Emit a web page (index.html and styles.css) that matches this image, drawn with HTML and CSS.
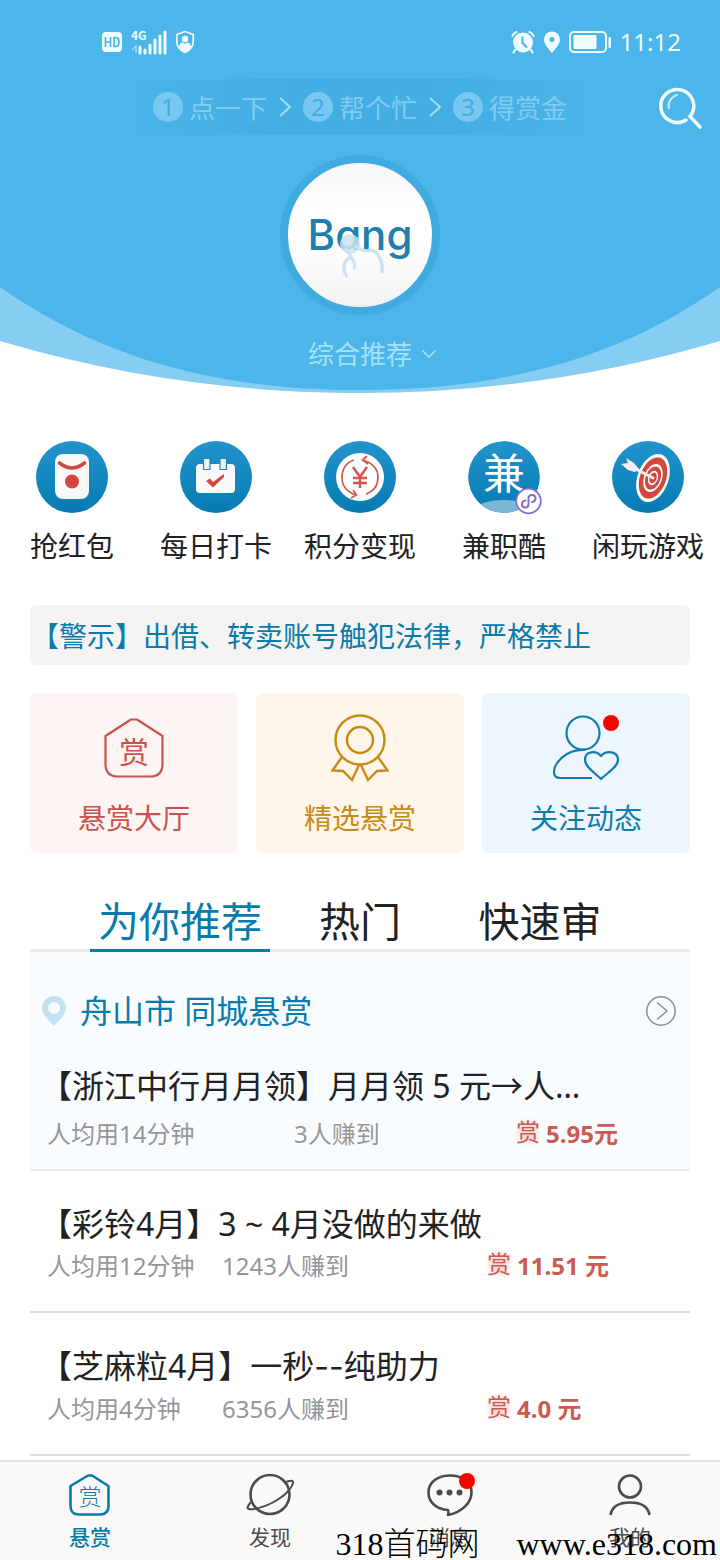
FILE: index.html
```html
<!DOCTYPE html>
<html lang="zh-CN">
<head>
<meta charset="utf-8">
<meta name="viewport" content="width=device-width, initial-scale=1">
<title>悬赏</title>
<link rel="stylesheet" href="styles.css">
</head>
<body>
<header class="hero">
  <svg class="hero-bg" viewBox="0 0 720 393" preserveAspectRatio="none" aria-hidden="true">
    <path fill="#86cdf3" d="M0 0H720V341Q545 393 360 393Q175 393 0 341Z"/>
    <path fill="#4cb5e9" d="M0 0H720V287C630 350 520 390 360 390C200 390 90 350 0 287Z"/>
  </svg>
  <div class="status">
    <div class="status-group">
      <svg width="22" height="22" viewBox="0 0 22 22"><rect x="1" y="1" width="20" height="20" rx="4" fill="#eefcff"/><path d="M4.500 6V16M9.500 6V16M4.500 11H9.500M13 6.500V15.500H14.500Q18 15.500 18 11T14.500 6.500Z" fill="none" stroke="#4cb5e9" stroke-width="1.700"/></svg>
      <div class="signal">
        <span class="net">4G</span>
        <svg width="36" height="24" viewBox="0 0 36 24"><path d="M9 17V23M14 20V23M19 15V23M24 10V23M29 6V23M34 2V23" stroke="#eefcff" stroke-width="3" stroke-linecap="round"/><path d="M1 20L5 16V23" stroke="#9bdcf6" stroke-width="1.500" fill="none"/></svg>
      </div>
      <svg width="20" height="24" viewBox="0 0 20 24"><path d="M10 1.500L18.200 4.500V12Q18.200 18.500 10 22.500Q1.800 18.500 1.800 12V4.500Z" fill="none" stroke="#eefcff" stroke-width="1.700" stroke-linejoin="round"/><circle cx="10" cy="9" r="3.200" fill="#eefcff"/><path d="M4 17Q4.500 12.500 8 12.500L10 14L12 12.500Q15.500 12.500 16 17Q14 20 10 22Q6 20 4 17Z" fill="#eefcff"/></svg>
    </div>
    <div class="status-group">
      <svg width="24" height="24" viewBox="0 0 24 24"><circle cx="12" cy="12.500" r="10" fill="#eefcff"/><path d="M1.500 6Q2.500 3 5.500 2M22.500 6Q21.500 3 18.500 2M4 20L2.500 22.500M20 20L21.500 22.500" stroke="#eefcff" stroke-width="2.200" stroke-linecap="round" fill="none"/><path d="M11.500 6.500V13L16 17.500" stroke="#4cb5e9" stroke-width="2" fill="none"/></svg>
      <svg width="18" height="24" viewBox="0 0 18 24"><path fill-rule="evenodd" fill="#eefcff" d="M9 1.500A8 8 0 0 0 1 9.500C1 14 5 18 9 23C13 18 17 14 17 9.500A8 8 0 0 0 9 1.500ZM9 7A2.500 2.500 0 1 1 9 12A2.500 2.500 0 1 1 9 7Z"/></svg>
      <svg width="43" height="24" viewBox="0 0 43 24"><rect x="1" y="2" width="36" height="20" rx="4" fill="none" stroke="#eefcff" stroke-width="2"/><rect x="4.500" y="5" width="23" height="14" rx="1" fill="#eefcff"/><rect x="39.500" y="7" width="2.500" height="11" rx="1" fill="#eefcff"/></svg>
      <time class="clock">11:12</time>
    </div>
  </div>
  <div class="guide">
    <ol class="steps">
      <li><span class="num">1</span>点一下</li>
      <li><svg class="arrow" width="14" height="22" viewBox="0 0 14 22"><path d="M2 2L12 11L2 20" fill="none" stroke="#a3dffa" stroke-width="2"/></svg><span class="num">2</span>帮个忙</li>
      <li><svg class="arrow" width="14" height="22" viewBox="0 0 14 22"><path d="M2 2L12 11L2 20" fill="none" stroke="#a3dffa" stroke-width="2"/></svg><span class="num">3</span>得赏金</li>
    </ol>
    <button class="search" type="button" aria-label="搜索"><svg width="42" height="42" viewBox="0 0 42 42" fill="none" stroke="#f2fdff" stroke-linecap="round"><path d="M26 34A16.500 16.500 0 1 1 30 30.500L40 41" stroke-width="3.500"/><path d="M9 22A11 11 0 0 1 17 9" stroke="#c4ebfb" stroke-width="2.200"/></svg></button>
  </div>
  <button class="bang" type="button">
    <span>Bang</span>
    <svg class="hand" width="50" height="46" viewBox="0 0 50 46" fill="none" stroke="#c9e3f0" stroke-width="3.200" stroke-linecap="round"><circle cx="14" cy="11" r="10" fill="#c9e3f0" fill-opacity=".85" stroke="none"/><path d="M10 16L15 24Q19 28 18.500 35M13 25Q4 32 10.500 43M20 13Q28 20 35 17Q47 21 46 39"/></svg>
  </button>
  <button class="filter" type="button">综合推荐<svg width="16" height="10" viewBox="0 0 16 10"><path d="M1.500 1.500L8 8L14.500 1.500" fill="none" stroke="#a5e3fb" stroke-width="1.600"/></svg></button>
</header>

<main>
  <svg class="defs" width="0" height="0" aria-hidden="true"><defs><linearGradient id="blue" x1="0" y1="0" x2="0" y2="1"><stop offset="0" stop-color="#2393cd"/><stop offset="1" stop-color="#057bb1"/></linearGradient><clipPath id="disc"><circle cx="36" cy="36" r="36"/></clipPath></defs></svg>
  <nav class="cats">
    <a href="#"><svg viewBox="0 0 72 72"><circle cx="36" cy="36" r="36" fill="url(#blue)"/><rect x="19" y="13" width="34" height="45" rx="8" fill="#faf9fa"/><path d="M23.500 22Q36 32 48.500 22" fill="none" stroke="#d2483f" stroke-width="3.600" stroke-linecap="round"/><circle cx="36" cy="40.500" r="7" fill="#d2483f"/></svg>抢红包</a>
    <a href="#"><svg viewBox="0 0 72 72"><circle cx="36" cy="36" r="36" fill="url(#blue)"/><rect x="16" y="23" width="39" height="29" rx="4" fill="#fafafa"/><path d="M23.500 17.500H30V28.500H23.500ZM40 17.500H46.500V28.500H40Z" fill="#eaf3fa" stroke="#2683b2" stroke-width="1.200"/><path d="M26 40L30 37.500L33 41L44 33V36L33 46.500Z" fill="#d2483f"/></svg>每日打卡</a>
    <a href="#"><svg viewBox="0 0 72 72"><circle cx="36" cy="36" r="36" fill="url(#blue)"/><circle cx="36" cy="36" r="24" fill="#fff"/><g fill="none" stroke="#d45750"><path d="M30 19Q18 23 18 37Q18 49 32 54M29 49L32.500 54L27 57M42 53Q54 49 54 36Q54 24 39 19M43 15L38.500 19L44 23" stroke-width="1.700"/><path d="M29 26L36 36L43 26M36 36V47M29 37H43M29 42H43" stroke-width="2.500"/></g></svg>积分变现</a>
    <a href="#"><svg viewBox="0 0 72 72"><g clip-path="url(#disc)"><circle cx="36" cy="36" r="36" fill="url(#blue)"/><ellipse cx="36" cy="75" rx="36" ry="16" fill="#7db7d7"/></g><text x="36" y="48" text-anchor="middle" class="jian">兼</text><circle cx="60.500" cy="60" r="12.300" fill="#fff" stroke="#8271d0" stroke-width="1.800"/><path d="M57.500 59.500Q54 60 54 63Q54 66.500 57.500 66.500Q60.500 66.500 60.500 63V57.500Q60.500 54 64 54Q67.500 54 67.500 57.500Q67.500 60.500 64 61" fill="none" stroke="#8271d0" stroke-width="2" stroke-linecap="round"/></svg>兼职酷</a>
    <a href="#"><svg viewBox="0 0 72 72"><circle cx="36" cy="36" r="36" fill="url(#blue)"/><g transform="rotate(20 41 37)"><ellipse cx="41" cy="37" rx="15.500" ry="25" fill="#fafafa"/><ellipse cx="41" cy="37" rx="13" ry="21.500" fill="#d2483f"/><ellipse cx="41" cy="37" rx="9" ry="14.500" fill="#fafafa"/><ellipse cx="41" cy="37" rx="7.500" ry="12" fill="#d2483f"/><ellipse cx="41" cy="37" rx="4.800" ry="7.500" fill="#fafafa"/><ellipse cx="41" cy="37" rx="3.500" ry="5.500" fill="#d2483f"/></g><path d="M41 37L22 27" stroke="#fbeef0" stroke-width="2.800" stroke-linecap="round"/><path d="M27 28L22 22L14 17L16 22L9 23L16 29L23 31Z" fill="#fbeef0"/></svg>闲玩游戏</a>
  </nav>

  <div class="wrap">
    <p class="notice">【警示】出借、转卖账号触犯法律，严格禁止</p>

    <nav class="cards">
      <a class="card red" href="#"><svg width="72" height="72" viewBox="0 0 72 72"><path d="M33 7.500H39L64.500 24V52Q64.500 64.500 52 64.500H20Q7.500 64.500 7.500 52V24Z" fill="none" stroke="currentColor" stroke-width="2.200" stroke-linejoin="round"/><text x="36" y="51" text-anchor="middle" class="shang-lg">赏</text></svg>悬赏大厅</a>
      <a class="card gold" href="#"><svg width="72" height="72" viewBox="0 0 72 72" fill="none" stroke="currentColor" stroke-width="2.400"><circle cx="36" cy="28" r="24.500"/><circle cx="36" cy="28" r="13"/><path d="M18 45L8.500 58.500L19 59L28 68L35 53M54 45L63.500 58.500L53 59L44 68L37 53"/></svg>精选悬赏</a>
      <a class="card blue" href="#"><svg width="72" height="72" viewBox="0 0 72 72" fill="none" stroke="currentColor" stroke-width="2.200"><circle cx="33" cy="21" r="16.500"/><path d="M35 38C15 37 4 52 4 60Q4 66 10 66H42"/><path d="M51 67C45 61 35 55 35 48C35 39 46 38 51 44C56 38 68 39 68 48C68 55 57 61 51 67Z" stroke-linejoin="round"/><circle cx="61" cy="11" r="8" fill="#fb0000" stroke="none"/></svg>关注动态</a>
    </nav>

    <div class="tabs" role="tablist">
      <button type="button" role="tab" aria-selected="true">为你推荐</button>
      <button type="button" role="tab" aria-selected="false">热门</button>
      <button type="button" role="tab" aria-selected="false">快速审</button>
    </div>

    <section class="city">
      <a class="city-head" href="#">
        <svg width="24" height="30" viewBox="0 0 24 30"><path fill="#c3e1f0" fill-rule="evenodd" d="M12 0A12 12 0 0 0 0 12C0 19 7 24 12 30C17 24 24 19 24 12A12 12 0 0 0 12 0ZM12 6A6 6 0 1 1 12 18A6 6 0 1 1 12 6Z"/></svg>
        <h2>舟山市 同城悬赏</h2>
        <svg width="30" height="30" viewBox="0 0 30 30" fill="none" stroke="#8b8f91" stroke-width="1.500"><circle cx="15" cy="15" r="14.200"/><path d="M11 6.500L21 15L11 23.500"/></svg>
      </a>
      <article>
        <h3>【浙江中行月月领】月月领 5 元→人…</h3>
        <div class="meta wide"><span>人均用14分钟</span><span>3人赚到</span><span class="pay"><i>赏</i><b>5.95元</b></span></div>
      </article>
    </section>

    <article class="item">
      <h3>【彩铃4月】3 ~ 4月没做的来做</h3>
      <div class="meta"><span>人均用12分钟</span><span>1243人赚到</span><span class="pay"><i>赏</i><b>11.51 元</b></span></div>
    </article>
    <article class="item">
      <h3>【芝麻粒4月】一秒<span class="dash">--</span>纯助力</h3>
      <div class="meta"><span>人均用4分钟</span><span>6356人赚到</span><span class="pay"><i>赏</i><b>4.0 元</b></span></div>
    </article>
  </div>
</main>

<nav class="tabbar">
  <a class="on" href="#"><svg width="48" height="44" viewBox="0 0 48 44"><path d="M22 1.500H26L42.500 12V32Q42.500 40.500 34 40.500H13Q4.500 40.500 4.500 32V12Z" fill="none" stroke="currentColor" stroke-width="2.600" stroke-linejoin="round"/><text x="24" y="31" text-anchor="middle" class="shang-sm">赏</text></svg>悬赏</a>
  <a href="#"><svg width="48" height="44" viewBox="0 0 48 44" fill="none" stroke="currentColor"><circle cx="24" cy="20.500" r="19.500" stroke-width="2.600"/><path d="M38 9C44 6 48 6 47 9C44 20 25 32 8 35C0 36 0 34 5 28" stroke-width="2"/></svg>发现</a>
  <a href="#"><svg width="48" height="44" viewBox="0 0 48 44" fill="none" stroke="currentColor"><path d="M22 36C10 35 2.500 28 2.500 18.500C2.500 8 12 1.500 24 1.500S45.500 8 45.500 18.500C45.500 28 37 38 22 41Q23 38 22 36Z" stroke-width="2.600" stroke-linejoin="round"/><g fill="currentColor" stroke="none"><circle cx="13.500" cy="18.500" r="3"/><circle cx="23.500" cy="18.500" r="3"/><circle cx="33.500" cy="18.500" r="3"/></g><circle cx="41" cy="7" r="8" fill="#fb0000" stroke="none"/></svg>消息</a>
  <a href="#"><svg width="48" height="44" viewBox="0 0 48 44" fill="none" stroke="currentColor" stroke-width="2.600"><circle cx="24" cy="12.500" r="11"/><path d="M4.500 41C6 32 14 28.500 24 28.500S42 32 43.500 41"/></svg>我的</a>
</nav>
<div class="mark"><span>318首码网</span><span>www.e318.com</span></div>
</body>
</html>
```
FILE: styles.css
```css
* { box-sizing: border-box; }
body {
  margin: 0;
  min-height: 100vh;
  display: flex;
  flex-direction: column;
  position: relative;
  background: #fff;
  color: #222;
  font-family: "Noto Sans", "Noto Sans CJK SC", sans-serif;
  font-size: 28px;
}
h2, h3, p, ol { margin: 0; padding: 0; font-weight: 400; }
a { color: inherit; text-decoration: none; }
button { border: 0; padding: 0; background: none; font: inherit; color: inherit; cursor: pointer; }
svg { display: block; flex: none; overflow: visible; }
svg text { fill: currentColor; font-family: "Noto Sans CJK SC", sans-serif; }

.hero { position: relative; isolation: isolate; display: flex; flex-direction: column; align-items: center; padding-bottom: 19px; }
.hero-bg { position: absolute; z-index: -1; inset: 0; width: 100%; height: 100%; }

.status { width: 100%; display: flex; justify-content: space-between; padding: 27px 39px 22px 101px; }
.status-group { display: flex; align-items: center; height: 30px; gap: 8px; color: #eefcff; }
.signal { position: relative; }
.net { position: absolute; left: 0; top: -3px; font: 700 12px/16px "Noto Sans CJK SC", sans-serif; }
.clock { font-size: 24px; line-height: 30px; }

.guide { width: 100%; display: grid; grid-template-columns: 1fr auto 1fr; align-items: center; }
.steps {
  grid-column: 2;
  list-style: none;
  display: flex;
  justify-content: center;
  width: 480px;
  height: 56px;
  color: #82ccf3;
  font-size: 26px;
  background: linear-gradient(90deg, #42aee300, #42aee3 35%, #42aee3 65%, #42aee300);
}
.steps li { display: flex; align-items: center; gap: 6px; }
.arrow { margin: 0 5px 0 11px; }
.num { width: 30px; height: 30px; border-radius: 50%; background: #79c8f1; color: #43ace1; font-size: 24px; line-height: 30px; text-align: center; }
.search { justify-self: end; margin-right: 18px; }

.bang {
  position: relative;
  width: 160px;
  height: 160px;
  margin-top: 20px;
  border: 8px solid #3fabe1;
  border-radius: 50%;
  background: linear-gradient(#f7f6f6, #fff 30%, #fff 55%, #f3f2f2);
  color: #2080ad;
  font-family: Inter, sans-serif;
  font-size: 42px;
  font-weight: 500;
  font-feature-settings: "cv11";
  line-height: 48px;
}
.hand { position: absolute; left: 48px; top: 70px; }
.filter { display: flex; align-items: center; gap: 9px; margin: 19px 0 0 25px; color: #a5e3fb; font-size: 26px; line-height: 40px; }

.defs { position: absolute; }
.cats { display: grid; grid-template-columns: repeat(5, 1fr); padding-top: 48px; }
.cats a { display: flex; flex-direction: column; align-items: center; gap: 13px; line-height: 40px; white-space: nowrap; }
.cats svg { width: 72px; height: 72px; }
.cats .jian { fill: #fff; font-size: 42px; }

.wrap { padding: 39px 30px 4px; }
.notice { padding: 2px 1px 0; border-radius: 6px; background: #f5f4f2; color: #087bad; line-height: 58px; }

.cards { display: grid; grid-template-columns: repeat(3, 1fr); gap: 18px; margin-top: 28px; }
.card { display: flex; flex-direction: column; align-items: center; gap: 14px; padding: 19px 0 15px; border-radius: 6px; line-height: 40px; }
.red { color: #c9524c; background: #fdf5f4; }
.gold { color: #c78a16; background: #fef6e9; }
.blue { color: #117cae; background: #edf6fd; }
.shang-lg { font-size: 30px; }

.tabs { display: flex; justify-content: center; margin-top: 40px; box-shadow: inset 0 -3px #e9ebec; }
.tabs button { width: 180px; font-size: 41px; line-height: 56px; border-bottom: 3px solid transparent; }
.tabs [aria-selected="true"] { color: #087bad; border-color: #087bad; }

.city { padding: 35px 0 17px; background: #f8fcff; border-bottom: 2px solid #e9ebec; }
.city-head { display: flex; align-items: center; padding: 0 14px 0 12px; gap: 14px; color: #087bad; }
.city-head h2 { flex: 1; font-size: 32px; line-height: 48px; }
.city article { margin-top: 27px; }
h3 { padding-left: 10px; font-size: 32px; line-height: 48px; white-space: nowrap; overflow: hidden; text-overflow: ellipsis; }
.dash { font-family: Inter, sans-serif; }
.item { padding: 29px 0 27px; border-bottom: 2px solid #dedede; }
.meta { display: grid; grid-template-columns: 175px 265px 1fr; padding-left: 17px; color: #969696; font-size: 24px; line-height: 36px; }
.meta.wide { grid-template-columns: 247px 222px 1fr; margin-top: 6px; }
.pay { display: flex; gap: 6px; color: #cb5a52; }
.pay i { width: 24px; height: 32px; font-style: normal; line-height: 32px; background: radial-gradient(circle, #fbdcd8 30%, #fbdcd800 75%); }
.pay b { font-weight: 700; }

.tabbar { display: grid; grid-template-columns: repeat(4, 1fr); margin-top: auto; border-top: 2px solid #e2e1e0; background: #faf9f8; color: #4b4b4b; }
.tabbar a { display: flex; flex-direction: column; align-items: center; gap: 4px; padding: 12px 0 8px; font-size: 21px; line-height: 30px; }
.tabbar .on { color: #087bad; font-weight: 500; }
.shang-sm { font-size: 23px; font-weight: 300; }

.mark {
  position: absolute;
  right: 0;
  bottom: 0;
  display: flex;
  gap: 37px;
  padding-right: 3px;
  color: #000;
  font: 300 32px/32px "Liberation Serif", "Noto Sans CJK SC", serif;
  pointer-events: none;
}
```
